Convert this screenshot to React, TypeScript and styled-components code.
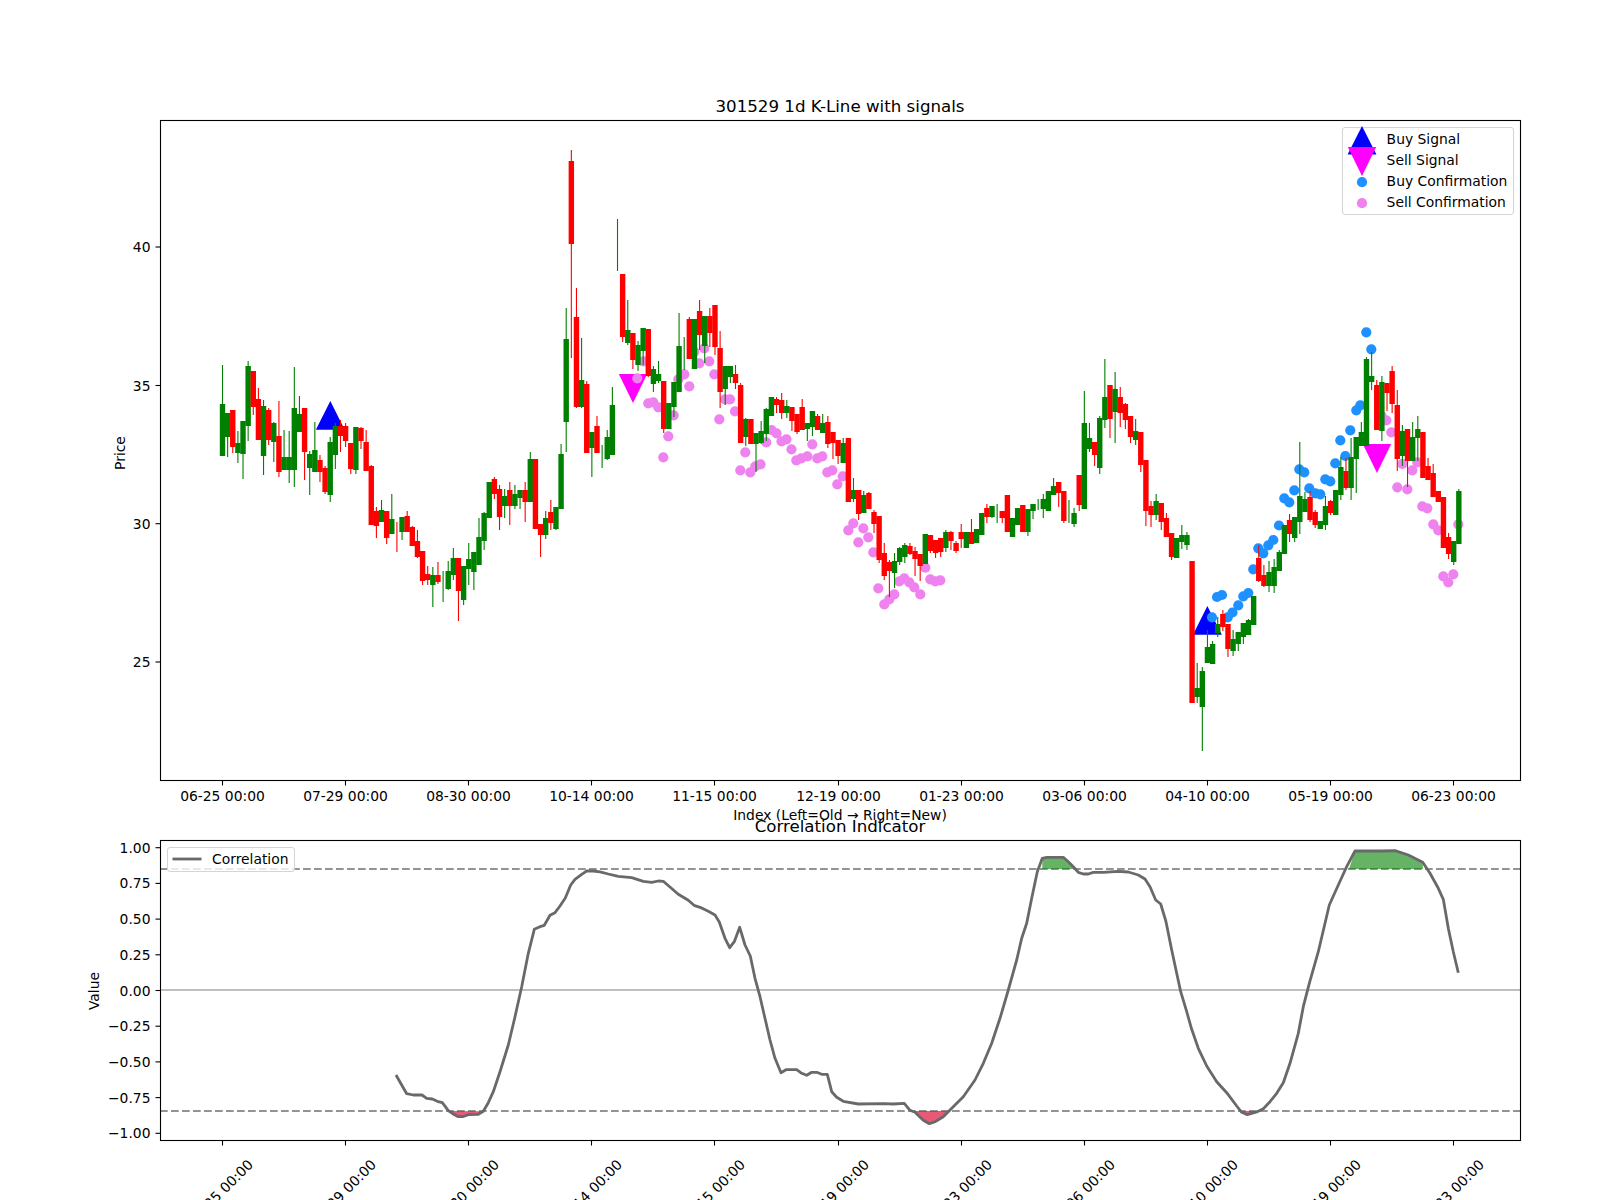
import React from "react";
import styled, { createGlobalStyle } from "styled-components";

// [colour, wick top, body top, body bottom, wick bottom], read off as screen y
type Candle = ["g" | "r", number, number, number, number];

const CANDLES: Candle[] = [
  ["g",365,404,456,456],["g",413,413,437,457],["r",410,410,447,453],["g",431,443,453,463],["g",421,421,454,479],
  ["g",361,366,426,441],["r",371,371,407,415],["r",388,399,440,440],["g",400,406,456,475],["r",408,410,440,445],
  ["g",422,423,442,462],["r",401,436,472,477],["g",430,457,470,470],["g",431,457,470,483],["g",367,408,470,487],
  ["g",396,414,432,432],["r",408,408,452,480],["g",451,454,468,495],["g",422,450,472,472],["r",455,460,472,482],
  ["r",466,468,492,494],["g",437,442,495,502],["g",423,426,455,469],["r",420,426,436,452],["r",423,426,441,447],
  ["r",443,443,469,474],["g",427,427,470,474],["r",427,428,441,449],["r",430,442,471,471],["r",465,466,525,525],
  ["r",507,511,526,538],["g",500,510,522,522],["r",511,511,538,544],["g",494,519,534,534],["r",522,530,530,552],
  ["g",517,517,532,540],["r",511,516,532,532],["r",526,527,546,546],["r",530,541,557,558],["r",551,551,581,585],
  ["r",566,574,580,585],["g",567,575,585,607],["r",562,575,582,584],["g",571,580,580,602],["g",561,571,589,590],
  ["g",548,558,575,580],["r",558,558,591,621],["g",566,566,600,605],["g",543,559,569,585],["g",552,552,572,590],
  ["g",518,537,565,565],["g",512,513,541,550],["g",482,482,518,518],["r",477,479,494,499],["r",485,489,517,530],
  ["g",489,496,506,518],["r",482,490,506,525],["g",485,494,506,509],["g",490,490,498,509],["r",482,490,502,522],
  ["g",452,459,502,502],["r",459,459,529,529],["r",524,524,535,557],["g",511,518,535,539],["r",500,512,523,530],
  ["g",507,507,529,530],["g",444,454,509,509],["g",308,339,422,452],["r",150,161,244,358],["r",288,317,407,408],
  ["g",338,380,407,408],["r",381,384,453,453],["g",432,432,448,477],["r",416,426,453,453],["g",445,456,456,468],
  ["g",430,437,459,460],["g",387,405,455,455],["g",219,245,245,271],["r",274,274,337,342],["g",300,330,343,345],
  ["r",333,333,360,369],["g",341,345,365,371],["g",328,328,351,365],["r",329,329,376,377],["g",366,369,384,392],
  ["g",361,374,381,383],["r",381,381,429,433],["g",403,403,429,429],["g",382,382,407,417],["g",313,346,392,392],
  ["g",337,350,350,370],["r",317,319,359,359],["g",319,319,369,369],["r",300,311,335,350],["g",316,316,346,363],
  ["r",308,316,333,347],["r",305,305,347,355],["r",331,348,392,408],["g",366,366,389,405],["g",366,366,377,383],
  ["r",365,374,383,389],["r",383,385,443,443],["g",418,419,437,446],["r",419,419,444,444],["g",433,433,444,472],
  ["g",421,431,443,444],["g",408,409,434,441],["g",397,397,416,416],["r",397,399,405,413],["r",393,400,413,419],
  ["g",400,406,413,418],["r",407,407,421,431],["r",414,414,432,434],["r",399,407,430,430],["g",423,423,429,441],
  ["g",411,411,427,436],["r",414,416,430,430],["g",414,423,433,433],["r",416,422,444,448],["r",432,432,443,459],
  ["r",440,440,456,464],["g",438,443,463,463],["r",438,438,502,502],["g",478,490,499,502],["r",490,490,514,520],
  ["g",491,495,513,513],["r",492,493,509,509],["r",510,512,524,533],["r",516,516,560,563],["r",543,553,576,580],
  ["r",560,562,571,597],["g",553,561,573,588],["g",547,548,562,565],["g",543,545,557,563],["r",543,546,554,555],
  ["r",547,551,559,576],["r",554,554,566,581],["g",534,534,564,564],["r",535,535,551,553],["r",540,540,553,558],
  ["r",538,538,552,557],["g",530,532,548,552],["r",531,532,541,550],["r",541,543,551,553],["r",524,532,539,548],
  ["g",532,532,548,548],["r",519,532,544,544],["g",529,529,543,543],["g",513,513,535,535],["r",504,508,517,523],
  ["g",506,506,517,518],["g",504,514,514,523],["r",511,511,518,523],["r",495,495,532,532],["g",518,518,537,537],
  ["g",508,508,525,525],["r",505,505,532,532],["g",509,509,532,536],["g",504,504,511,519],["g",499,505,505,510],
  ["g",494,499,509,518],["g",491,491,511,511],["g",478,486,495,495],["r",482,482,493,507],["r",491,491,521,523],
  ["g",500,510,510,523],["g",508,513,524,527],["r",475,475,505,511],["g",391,423,509,509],["g",423,438,449,452],
  ["r",442,442,455,466],["g",416,418,468,474],["g",359,397,420,428],["r",385,385,419,438],["g",372,389,412,443],
  ["r",387,397,413,427],["r",403,404,420,429],["r",416,416,437,443],["g",419,431,440,445],["r",432,432,465,472],
  ["r",460,460,511,526],["r",501,506,515,527],["g",494,501,515,520],["r",503,503,522,530],["r",513,518,537,537],
  ["r",533,533,557,560],["g",538,538,558,558],["g",525,535,542,549],["g",532,535,545,550],["r",561,561,703,703],
  ["g",663,688,697,703],["g",667,671,707,751],["g",630,647,663,663],["g",641,644,664,664],["g",617,624,633,637],
  ["r",610,614,627,631],["r",624,624,649,657],["g",630,639,651,656],["g",632,632,644,651],["g",623,623,637,644],
  ["g",619,620,635,635],["g",596,596,625,625],["r",545,558,581,582],["r",565,575,586,587],["g",561,572,586,592],
  ["g",559,567,586,593],["g",550,552,571,571],["g",525,525,554,554],["r",514,520,534,542],["g",517,517,538,542],
  ["g",442,496,522,534],["g",492,499,512,512],["r",491,497,520,522],["r",510,512,525,528],["g",521,521,529,529],
  ["g",496,506,525,530],["r",500,501,513,515],["g",490,490,515,515],["g",457,467,495,500],["r",458,471,488,490],
  ["g",438,457,488,500],["g",437,437,459,493],["g",422,432,446,446],["g",357,359,446,446],["g",352,376,382,390],
  ["r",380,385,430,430],["g",376,382,431,441],["r",383,383,393,411],["r",366,371,404,413],["r",390,405,459,471],
  ["g",425,431,456,466],["r",429,429,461,487],["g",422,437,461,461],["g",416,429,438,461],["r",432,432,478,478],
  ["r",458,466,480,480],["r",464,473,497,497],["r",491,491,502,502],["r",497,497,548,548],["r",533,537,554,559],
  ["g",541,541,562,565],["g",489,491,544,544],
];

const BUY_DOTS = [
  [1212,617.3],[1217,597],[1222,595],[1227.7,617.3],[1232.5,612.5],[1238.3,605.3],[1243.3,596.3],[1248.3,593],
  [1253.3,569.3],[1258.3,548.3],[1263.3,553.3],[1268.3,545.3],[1273.3,540],[1279,525.5],[1284.3,498.3],[1289.3,502.3],
  [1294.3,490.3],[1299.3,469.3],[1304.3,472.3],[1309.3,488.3],[1315.3,493.3],[1320.3,494.3],[1325.3,479.3],[1330.3,481.3],
  [1335.3,463.3],[1340.3,440.3],[1345.3,456],[1350.3,430.3],[1356.3,410.3],[1360.3,405.3],[1366.3,332.3],[1371.3,349.3],
];

const SELL_DOTS = [
  [637.3,378.3],[643.3,361.3],[648.3,403.3],[653.3,402.3],[658.3,407.3],[663.3,457.3],[668.3,436.3],[673.7,415.3],
  [678.3,379.3],[684.3,374.3],[689.3,386.3],[694.3,351.7],[699.3,363.3],[704.3,348.3],[709.3,361.3],[714.3,374.3],
  [719.3,419.3],[725,399.3],[730,399.3],[735,411.3],[740.3,470.3],[745.3,452.3],[750.3,472.3],[755.3,466.3],
  [760.5,464.3],[766.3,442.3],[771.5,430],[776.5,433.3],[781.5,441.3],[786.5,439.3],[791.5,449.3],[796.3,460.3],
  [801.3,458.3],[807.3,456.3],[812.3,444.3],[817.3,458.3],[822.3,456.3],[827.3,472.3],[832.3,470.3],[837.3,484.3],
  [842.7,476.3],[848.3,530.3],[853.3,523.3],[858.3,542.3],[863.3,528.3],[868.3,537.3],[873.3,552.3],[878.3,588.3],
  [884.3,604.3],[889.3,599.3],[894.3,594.3],[899.3,581.3],[904.3,578.3],[909.3,582.3],[914.3,587.3],[920.3,594.3],
  [925.3,567.7],[930.3,579.3],[935.3,581.3],[940.3,580.3],[1381.7,416],[1386.3,420.3],[1391.3,432.3],[1397.3,487.3],
  [1402.3,464],[1407.3,489.3],[1412.3,470.3],[1417.3,462.3],[1422.3,506.3],[1427.3,508.3],[1433.3,524.3],[1438.3,530.3],
  [1443.3,576.3],[1448.3,582.3],[1453.3,574.3],[1458.3,524.3],
];

const CORRELATION =
  "396,1075 401.7,1085 406.7,1093.7 413.3,1095 422,1095 426.7,1098.3 432.3,1099 437.3,1101.3 442.3,1102.7 448.3,1110.7 " +
  "452.7,1113.7 458.3,1116.7 462.7,1116.7 468.3,1114.7 478.3,1114.3 483.3,1111.3 488.3,1102.7 493.3,1091.7 500,1071.7 " +
  "508.3,1045 515,1016.7 521.7,986.7 528.3,953.3 534.3,929.3 540,926.7 544.3,925.3 550,915.3 555,912.7 560,906 565.3,898 " +
  "570.7,885 575,879.3 581.7,874.3 586.7,871 593.3,871 600,871.8 608.3,874 618.3,876.3 631.7,877.7 643.3,881.3 651.7,882.3 " +
  "658.3,881 663.3,881.3 678.3,894.3 688.3,900.3 694,905.3 700,907.3 708.3,911.3 715,915 719.3,922 725,938.3 729.7,947.7 " +
  "734.3,941.7 739.7,927.3 745,945 750.3,956 755,978.3 760,996.7 770,1040 775,1058.3 781,1072.7 786,1069.7 796.7,1069.7 " +
  "801.7,1073.3 806.7,1075.3 811.7,1072.3 816.7,1072.3 821.7,1074.3 827.3,1074.3 831.7,1091.7 836.7,1097.3 843.3,1101.3 " +
  "858.3,1104 883.3,1103.7 893.3,1104 904.3,1103.3 910,1110.3 915,1112.3 923.3,1120.3 929.3,1123.7 935,1121.7 943.3,1116.7 " +
  "950,1110 963.3,1096.7 975,1080 983.3,1063.3 991.7,1043.3 1000,1018.3 1008.3,990 1016.7,960 1021.7,938.3 1026.7,923.3 " +
  "1031.7,898.3 1037.3,871.7 1042.3,858.3 1046.7,857.3 1063.3,857.3 1068.3,861.7 1073.3,866.7 1078.3,872.3 1083.3,874 " +
  "1088.3,874 1093.3,872.3 1103.3,872.3 1118.3,871.3 1128.3,872 1138.3,875 1145,879 1150,886.7 1155.7,900 1160.7,904 " +
  "1166,921.7 1171.7,950 1176.7,973.3 1180.7,991.7 1186.7,1011.7 1191.7,1029.3 1198.3,1048.3 1206.7,1066 1216.7,1081.7 " +
  "1226.7,1092.7 1236.7,1106 1241.7,1112.3 1247.3,1114.7 1256.7,1112 1263.3,1108.7 1270,1101.7 1276.7,1093.3 1283.3,1082.7 " +
  "1290,1063.3 1298.3,1033.3 1303.3,1006.7 1309.3,983.3 1318.3,951.7 1329.3,905 1338.3,885 1346.7,866.7 1355,851 1381.7,851 " +
  "1395,850.7 1408.3,855 1422.7,862.3 1430,873.3 1438.3,888.3 1443.3,899.3 1448.3,928.3 1453.3,951.7 1458.3,972.7";

const RED_FILLS = [
  "449,1111 452.7,1113.7 458.3,1116.7 462.7,1116.7 468.3,1114.7 478.3,1114.3 483.3,1111.3",
  "912,1111 915,1112.3 923.3,1120.3 929.3,1123.7 935,1121.7 943.3,1116.7 950,1111",
  "1239,1111 1241.7,1112.3 1247.3,1114.7 1252,1113.5 1256,1111",
];

const GREEN_FILLS = [
  "1042.3,869 1042.3,858.3 1046.7,857.3 1063.3,857.3 1068.3,861.7 1073.3,866.7 1075,869",
  "1349,869 1355,851 1381.7,851 1395,850.7 1408.3,855 1422.7,862.3 1423,869",
];

const DATES = ["06-25", "07-29", "08-30", "10-14", "11-15", "12-19", "01-23", "03-06", "04-10", "05-19", "06-23"];
const PRICE_TICKS = [[40, 247], [35, 385.5], [30, 523.7], [25, 662]];
const VALUE_TICKS = ["1.00", "0.75", "0.50", "0.25", "0.00", "−0.25", "−0.50", "−0.75", "−1.00"];

const candleX = (i: number) => 222.5 + 5.13 * i;
const tickX = (k: number) => Math.floor(candleX(k * 24)) + 0.5;
const valueY = (k: number) => 847.7 + 35.7 * k;

const GlobalStyle = createGlobalStyle`
  html, body {
    margin: 0;
    background: #fff;
  }
  body {
    font-family: "DejaVu Sans", "Liberation Sans", sans-serif;
    color: #000;
  }
`;

const Figure = styled.div`
  width: 1600px;
  height: 1200px;
  padding-top: 97px;
  box-sizing: border-box;
  overflow: hidden;
  background: #fff;
`;

const Axes = styled.section<{ $gap: number }>`
  position: relative;
  width: 1360px;
  margin: ${(p) => p.$gap}px 0 0 160px;
`;

const Title = styled.h2`
  height: 20px;
  margin: 0 0 3px;
  font-size: 16.67px;
  line-height: 20px;
  font-weight: 400;
  text-align: center;
  white-space: nowrap;
`;

const Plot = styled.svg`
  display: block;
  overflow: visible;
`;

const Frame = styled.rect`
  fill: none;
  stroke: #000;
  stroke-width: 1.1;
`;

const Tick = styled.line`
  stroke: #000;
  stroke-width: 1.1;
`;

const Label = styled.text`
  font-family: "DejaVu Sans", sans-serif;
  font-size: 13.89px;
  fill: #000;
`;

const Guide = styled.line<{ $dashed?: boolean }>`
  stroke: #808080;
  stroke-opacity: ${(p) => (p.$dashed ? 0.85 : 0.68)};
  stroke-width: ${(p) => (p.$dashed ? 2 : 1.5)};
  stroke-dasharray: ${(p) => (p.$dashed ? "7.7 3.3" : "none")};
`;

const Trace = styled.polyline`
  fill: none;
  stroke: #696969;
  stroke-width: 2.8;
  stroke-linejoin: round;
`;

const Legend = styled.div<{ $corner: "left" | "right"; $foot: number }>`
  position: absolute;
  top: 30px;
  ${(p) => (p.$corner === "left" ? "left: 7px;" : "right: 6.5px;")}
  box-sizing: border-box;
  padding: 0 0 ${(p) => p.$foot}px;
  border: 1.1px solid #d4d4d4;
  border-radius: 3px;
  background: rgba(255, 255, 255, 0.8);
`;

const LegendRow = styled.div<{ $height: number }>`
  display: flex;
  align-items: center;
  gap: 10px;
  height: ${(p) => p.$height}px;
  padding: 0 5.2px 0 4px;
  font-size: 13.89px;
  white-space: nowrap;
`;

const LegendKey = styled.svg`
  flex: none;
  overflow: visible;
`;

const BuyMarker = ({ x, y }: { x: number; y: number }) => (
  <polygon points={`${x},${y - 28.7} ${x - 14.4},${y} ${x + 14.4},${y}`} fill="#0000ff" />
);

const SellMarker = ({ x, y }: { x: number; y: number }) => (
  <polygon points={`${x - 14.2},${y} ${x + 14.2},${y} ${x},${y + 29}`} fill="#ff00ff" />
);

const PriceChart: React.FC = () => (
  <Axes $gap={0}>
    <Title>301529 1d K-Line with signals</Title>
    <Plot width={1360} height={660} viewBox="160 120 1360 660">
      <BuyMarker x={330.3} y={429.7} />
      <BuyMarker x={1207.4} y={634.7} />
      <SellMarker x={633} y={374} />
      <SellMarker x={1377} y={444} />
      {BUY_DOTS.map(([x, y]) => (
        <circle key={`b${x}`} cx={x} cy={y} r={5.1} fill="#1e90ff" />
      ))}
      {SELL_DOTS.map(([x, y]) => (
        <circle key={`s${x}`} cx={x} cy={y} r={5.1} fill="#ee82ee" />
      ))}
      {CANDLES.map(([colour, wickTop, bodyTop, bodyBottom, wickBottom], i) => {
        const fill = colour === "g" ? "#008000" : "#ff0000";
        const x = candleX(i);
        return (
          <g key={i}>
            <rect x={x - 0.55} y={wickTop} width={1.1} height={wickBottom - wickTop} fill={fill} />
            {bodyBottom > bodyTop && (
              <rect x={x - 2.7} y={bodyTop} width={5.4} height={bodyBottom - bodyTop} fill={fill} />
            )}
          </g>
        );
      })}
      <Frame x={160.5} y={120.5} width={1360} height={660} />
      {DATES.map((date, k) => (
        <g key={date}>
          <Tick x1={tickX(k)} x2={tickX(k)} y1={781} y2={785.5} />
          <Label x={tickX(k)} y={801} textAnchor="middle">
            {date} 00:00
          </Label>
        </g>
      ))}
      {PRICE_TICKS.map(([price, y]) => (
        <g key={price}>
          <Tick x1={155.5} x2={160} y1={y} y2={y} />
          <Label x={150.5} y={y + 5} textAnchor="end">
            {price}
          </Label>
        </g>
      ))}
      <Label x={840} y={820} textAnchor="middle">
        Index (Left=Old → Right=New)
      </Label>
      <Label x={124.5} y={453} textAnchor="middle" transform="rotate(-90 124.5 453)">
        Price
      </Label>
    </Plot>
    <Legend $corner="right" $foot={2.2}>
      <LegendRow $height={21}>
        <LegendKey width={30} height={21} viewBox="0 0 30 21">
          <BuyMarker x={15} y={26.6} />
        </LegendKey>
        Buy Signal
      </LegendRow>
      <LegendRow $height={21}>
        <LegendKey width={30} height={21} viewBox="0 0 30 21">
          <SellMarker x={15} y={-2.1} />
        </LegendKey>
        Sell Signal
      </LegendRow>
      <LegendRow $height={21}>
        <LegendKey width={30} height={21} viewBox="0 0 30 21">
          <circle cx={15} cy={12.2} r={5.1} fill="#1e90ff" />
        </LegendKey>
        Buy Confirmation
      </LegendRow>
      <LegendRow $height={21}>
        <LegendKey width={30} height={21} viewBox="0 0 30 21">
          <circle cx={15} cy={12.2} r={5.1} fill="#ee82ee" />
        </LegendKey>
        Sell Confirmation
      </LegendRow>
    </Legend>
  </Axes>
);

const CorrelationChart: React.FC = () => (
  <Axes $gap={37}>
    <Title>Correlation Indicator</Title>
    <Plot width={1360} height={300} viewBox="160 840 1360 300">
      <Guide x1={160} x2={1520} y1={990} y2={990} />
      <Guide $dashed x1={160} x2={1520} y1={869} y2={869} />
      <Guide $dashed x1={160} x2={1520} y1={1111} y2={1111} />
      {RED_FILLS.map((points) => (
        <polygon key={points} points={points} fill="#dc143c" fillOpacity={0.7} />
      ))}
      {GREEN_FILLS.map((points) => (
        <polygon key={points} points={points} fill="#008000" fillOpacity={0.6} />
      ))}
      <Trace points={CORRELATION} />
      <Frame x={160.5} y={840.5} width={1360} height={300} />
      {VALUE_TICKS.map((value, k) => (
        <g key={value}>
          <Tick x1={155.5} x2={160} y1={valueY(k)} y2={valueY(k)} />
          <Label x={150.5} y={valueY(k) + 5} textAnchor="end">
            {value}
          </Label>
        </g>
      ))}
      {DATES.map((date, k) => (
        <g key={date}>
          <Tick x1={tickX(k)} x2={tickX(k)} y1={1141} y2={1145.5} />
          <Label
            x={tickX(k) - 2}
            y={1197}
            textAnchor="middle"
            transform={`rotate(-45 ${tickX(k) - 2} 1192)`}
          >
            {date} 00:00
          </Label>
        </g>
      ))}
      <Label x={98.5} y={991} textAnchor="middle" transform="rotate(-90 98.5 991)">
        Value
      </Label>
    </Plot>
    <Legend $corner="left" $foot={0}>
      <LegendRow $height={22.5}>
        <LegendKey width={30} height={4} viewBox="0 0 30 4">
          <line x1={0.5} x2={29.5} y1={2} y2={2} stroke="#696969" strokeWidth={2.8} />
        </LegendKey>
        Correlation
      </LegendRow>
    </Legend>
  </Axes>
);

const App: React.FC = () => (
  <Figure>
    <GlobalStyle />
    <PriceChart />
    <CorrelationChart />
  </Figure>
);

export default App;
